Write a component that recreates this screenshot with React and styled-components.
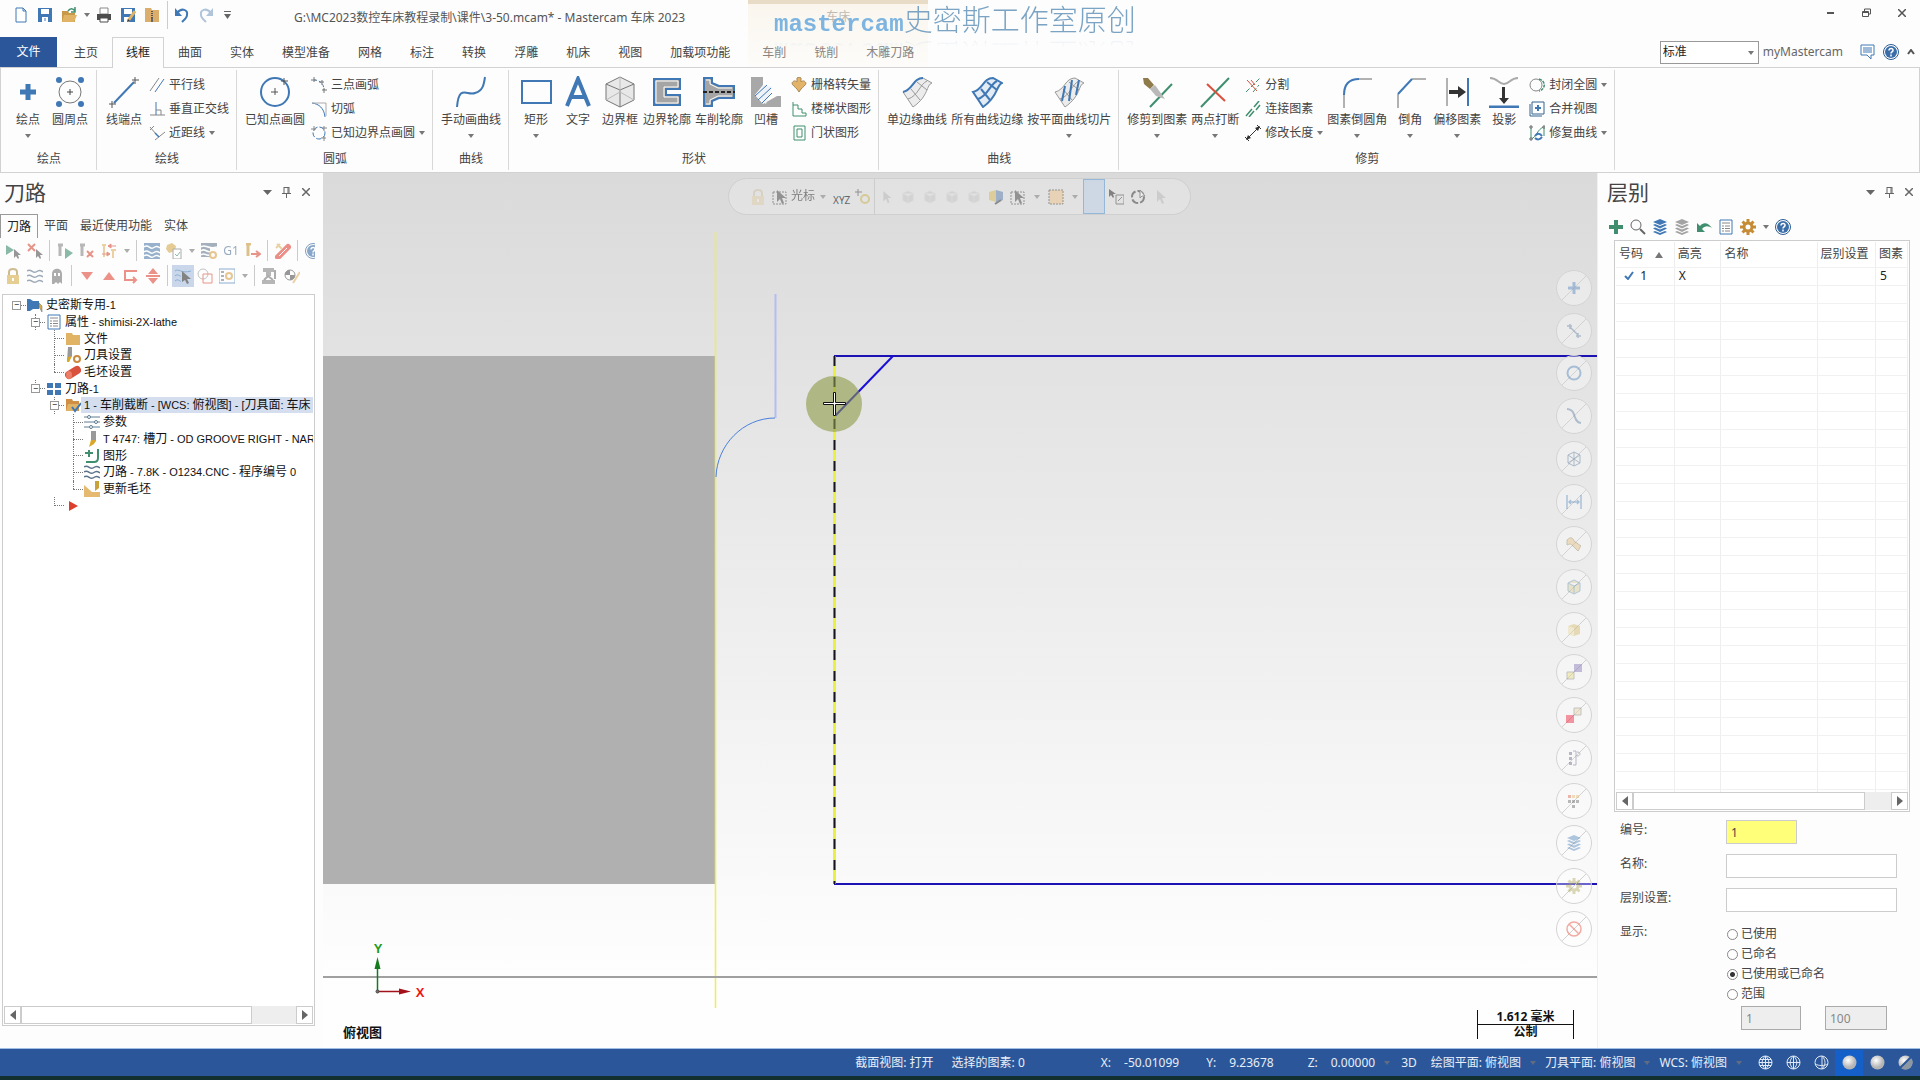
import React from "react";
import styled, { createGlobalStyle } from "styled-components";

const BLUE = "#3f78b5";
const GREEN = "#3f8f6f";
const GREY = "#8a8a8a";
const TAN = "#e0b365";
const RED = "#d9503c";

// Icons, large ones are on a 32 grid
const bigIcons = {
  point: <path d="M16 8v16M8 16h16" stroke={BLUE} strokeWidth="5" />,
  circlePoints: (
    <>
      <circle cx="16" cy="16" r="11" stroke="#777" />
      <path d="M16 13v6M13 16h6" stroke="#444" />
      <g fill={BLUE}>
        <circle cx="5" cy="4" r="3" />
        <circle cx="27" cy="4" r="3" />
        <circle cx="5" cy="28" r="3" />
        <circle cx="27" cy="28" r="3" />
      </g>
    </>
  ),
  line: (
    <>
      <path d="M6 27L26 6" stroke={BLUE} strokeWidth="2" />
      <path d="M4 25v7M1 28h7M27 1v7M24 4h7" stroke="#555" />
    </>
  ),
  circle: (
    <>
      <circle cx="16" cy="16" r="14" stroke={BLUE} strokeWidth="2" />
      <path d="M16 12v7M12 16h7M25 2v7M22 5h7" stroke="#555" />
    </>
  ),
  spline: (
    <path d="M2 31C4 8 12 20 20 17C28 15 29 8 30 1" stroke={BLUE} strokeWidth="2" />
  ),
  rect: <rect x="2" y="5" width="29" height="22" stroke={BLUE} strokeWidth="2" />,
  letter: (
    <path d="M5 30L16 3L27 30M9 21h14" stroke={BLUE} strokeWidth="4" />
  ),
  box: (
    <>
      <path d="M16 1l14 7v16l-14 7l-14-7V8z" fill="#e8e8e8" stroke="#777" />
      <path d="M2 8l14 6l14-6M16 14v17" stroke="#777" />
      <path d="M16 1v15M2 24l14-8l14 8" stroke="#bbb" />
    </>
  ),
  silhouette: (
    <>
      <path d="M3 3h26v10H15v6h14v10H3z" fill="#a5a5a5" stroke={BLUE} strokeWidth="2" />
      <path d="M5 5h22v6H13v10h14v6H5z" stroke="#fff" />
    </>
  ),
  turn: (
    <>
      <path d="M1 2h8v5l7 3h15v12H16l-7 3v5H1z" fill="#a5a5a5" stroke={BLUE} strokeWidth="2" />
      <path d="M3 4h4v4l8 4h14M3 28h4v-4l8-4h14" stroke="#fff" />
      <path d="M0 16h32" stroke="#222" strokeWidth="2" strokeDasharray="4 2" />
    </>
  ),
  relief: (
    <>
      <path d="M1 1h12v8L5 19l8 9l14-8h4v11H1z" fill="#a8a8a8" />
      <path d="M13 9l9 2l-6 17l-10-8z" fill="#eef3fa" />
      <path d="M5 20l12-11M8 24l13-12M12 27l10-10" stroke={BLUE} />
    </>
  ),
  edge: (
    <>
      <path d="M2 16C12 14 12 2 22 2L31 7C25 9 28 20 12 31z" fill="#ececec" stroke="#999" />
      <path d="M7 23C17 20 19 8 26 5M10 13l9 11M16 6l10 8" stroke="#999" />
      <path d="M2 16C12 14 12 2 22 2" stroke={BLUE} strokeWidth="2" />
    </>
  ),
  edges: (
    <>
      <path d="M2 16C12 14 12 2 22 2L31 7C25 9 28 20 12 31z" fill="#e3ebf5" stroke={BLUE} strokeWidth="2" />
      <path d="M7 23C17 20 19 8 26 5M10 13l9 11M16 6l10 8" stroke={BLUE} strokeWidth="2" />
    </>
  ),
  slice: (
    <>
      <path d="M2 16C12 14 12 2 22 2L31 7C25 9 28 20 12 31z" fill="#ececec" stroke="#999" />
      <path d="M7 23C17 20 19 8 26 5M10 13l9 11M16 6l10 8" stroke="#999" />
      <path d="M12 10l-3 15M19 4l-3 21M26 4l-3 15" stroke={BLUE} strokeWidth="2" />
    </>
  ),
  trim: (
    <>
      <path d="M9 31L31 8" stroke={GREEN} strokeWidth="2" />
      <path d="M2 2l5 0l6 7l-4 4l-6-5z" fill="#8f7a4a" />
      <path d="M9 13l5-4l10 14l-9-3z" fill="#b9b9b9" />
    </>
  ),
  breakTwo: (
    <>
      <path d="M2 31L30 2" stroke={GREEN} strokeWidth="2" />
      <path d="M8 8l18 17" stroke={RED} strokeWidth="2" />
    </>
  ),
  fillet: (
    <>
      <path d="M3 32V18M18 3h13" stroke="#666" />
      <path d="M3 19C3 8 8 3 18 3" stroke={BLUE} strokeWidth="2" />
    </>
  ),
  chamfer: (
    <>
      <path d="M4 32V18M18 3h14" stroke="#666" />
      <path d="M4 18L18 3" stroke={BLUE} strokeWidth="2" />
    </>
  ),
  offset: (
    <>
      <path d="M6 2v28" stroke="#666" />
      <path d="M27 2v28" stroke={BLUE} strokeWidth="2" />
      <path d="M8 14h9V10l8 6l-8 6v-4H8z" fill="#333" />
    </>
  ),
  project: (
    <>
      <path d="M2 2C10 2 10 8 16 8s6-6 14-6" stroke="#aaa" strokeWidth="2" />
      <path d="M14 11h3v11h4l-5 6l-5-6h3z" fill="#333" />
      <path d="M1 31h30" stroke={BLUE} strokeWidth="3" />
    </>
  ),
};

const layerShapes = (color) => (
  <g fill={color} stroke="none">
    <path d="M8 0l7 3l-7 3l-7-3z" />
    <path d="M1 6l2-1l5 2l5-2l2 1l-7 3.500z" />
    <path d="M1 9.500l2-1l5 2l5-2l2 1l-7 3.500z" />
    <path d="M1 13l2-1l5 2l5-2l2 1l-7 3z" />
  </g>
);

const gearShape = (color) => (
  <>
    <circle cx="8" cy="8" r="4" stroke={color} strokeWidth="3" />
    <path d="M8 0v3M8 13v3M0 8h3M13 8h3M2.500 2.500l2 2M11.500 11.500l2 2M13.500 2.500l-2 2M4.500 11.500l-2 2" stroke={color} strokeWidth="3" />
  </>
);

const cubeShape = (fill, line) => (
  <path d="M8 1l6 3v8l-6 3l-6-3V4zM2 4l6 3l6-3M8 7v8" fill={fill} stroke={line} />
);

const pointer = (color) => (
  <path d="M5 1v12l3-3l2 5l2-1l-2-5h4z" fill={color} />
);

// Small ones are on a 16 grid
const icons = {
  newFile: <path d="M3 1h7l3 3v11H3zM10 1v3h3" fill="#fff" stroke={BLUE} />,
  save: (
    <>
      <path d="M1 1h14v14H1z" fill={BLUE} />
      <path d="M4 2h8v5H4zM5 10h6v5H5z" fill="#fff" />
      <path d="M8 11v3" stroke={BLUE} />
    </>
  ),
  open: (
    <>
      <path d="M1 4h6l1 2h6v9H1z" fill="#c9994a" />
      <path d="M3 8h13l-3 7H1z" fill={TAN} />
      <path d="M7 4C9 1 12 1 14 4M14 0v5h-4" stroke={GREEN} strokeWidth="1.500" />
    </>
  ),
  print: (
    <>
      <path d="M4 1h8v6H4z" fill="#fff" stroke={GREY} />
      <path d="M1 7h14v6H1z" fill="#4c4c4c" />
      <path d="M4 11h8v4H4z" fill="#fff" stroke="#4c4c4c" />
    </>
  ),
  saveAs: (
    <>
      <path d="M1 1h14v14H1z" fill={BLUE} />
      <path d="M4 2h8v5H4zM4 10h5v5H4z" fill="#fff" />
      <path d="M8 14L15 4" stroke={TAN} strokeWidth="3" />
      <path d="M7 15l1-3l2 2z" fill="#333" />
    </>
  ),
  zip: (
    <>
      <path d="M1 1h6l1 2h7v12H1z" fill="#dcae6b" />
      <path d="M8 4v8" stroke="#555" strokeWidth="2" strokeDasharray="1 1" />
      <path d="M7 11h2v4H7z" fill="#666" />
    </>
  ),
  undo: (
    <>
      <path d="M3 6C8 0 14 3 13 8c0 3-3 5-5 7" stroke={BLUE} strokeWidth="2" />
      <path d="M1 1v8h7z" fill={BLUE} />
    </>
  ),
  redo: (
    <>
      <path d="M13 6C8 0 2 3 3 8c0 3 3 5 5 7" stroke="#b0c4da" strokeWidth="2" />
      <path d="M15 1v8H8z" fill="#b0c4da" />
    </>
  ),
  parallel: (
    <>
      <path d="M1 14L10 1" stroke="#888" />
      <path d="M6 15L15 2" stroke={BLUE} />
    </>
  ),
  perpendicular: (
    <>
      <path d="M1 14h15" stroke="#888" />
      <path d="M7 1v13" stroke={BLUE} />
      <path d="M7 9h5v5" stroke="#888" />
    </>
  ),
  closest: (
    <>
      <path d="M1 2l6 7M6 15l10-8M1 5l4-4" stroke="#888" />
      <path d="M6 8l4 4" stroke={BLUE} strokeWidth="1.500" />
    </>
  ),
  arc3: (
    <>
      <path d="M3 3C9 3 13 7 13 13" stroke={BLUE} strokeDasharray="3 2" />
      <path d="M0 3h5M3 0v5M8 5h5M11 3v5M11 13h5M13 11v5" stroke="#777" />
    </>
  ),
  arcTangent: (
    <>
      <path d="M1 2C8 3 13 7 14 16" stroke={BLUE} />
      <path d="M1 2h14v13" stroke="#aaa" />
    </>
  ),
  circleEdge: (
    <>
      <circle cx="8" cy="8" r="6" stroke={BLUE} strokeDasharray="5 2" />
      <path d="M0 4h5M3 1v5M11 3h5M13 1v5M10 13h5M13 11v5" stroke="#888" />
    </>
  ),
  raster: (
    <path d="M6 1c0-1 4-1 4 0v4c2-2 4-1 5 1c0 2-3 4-5 6l-2 3l-2-3c-2-2-5-4-5-6c1-2 3-3 5-1z" fill="#e3b368" stroke="#a88a55" />
  ),
  stairs: <path d="M2 1v14h13v-3h-4V8H7V4H2" stroke={GREEN} />,
  door: <path d="M3 1h11v14H3zM6 4h5v8H6z" stroke={GREEN} />,
  divide: (
    <>
      <path d="M1 15L15 1M8 15l6-7" stroke={GREEN} strokeDasharray="5 2" />
      <path d="M2 3l10 11M6 3l4 5" stroke={RED} />
    </>
  ),
  join: (
    <path d="M1 15l6-7M9 6l5-6M4 16l5-6M11 9l4-5" stroke={GREEN} strokeWidth="1.500" />
  ),
  length: (
    <>
      <path d="M2 14L14 2" stroke="#333" />
      <path d="M0 12l4 4M12 0l4 4" stroke="#333" />
      <path d="M1 15l5-2l-3-3zM15 1l-5 2l3 3z" fill="#333" />
    </>
  ),
  closeArc: (
    <>
      <circle cx="7" cy="8" r="6" stroke="#888" />
      <path d="M10 2C17 4 17 12 10 14" stroke={GREEN} strokeWidth="1.500" strokeDasharray="3 1" />
    </>
  ),
  merge: (
    <>
      <path d="M3 1h12v12H3zM1 3v12h12" stroke="#35658f" />
      <path d="M9 4v6M6 7h6" stroke={BLUE} strokeWidth="2" />
    </>
  ),
  repair: (
    <>
      <path d="M2 2v12M2 14C8 12 8 4 15 2v9" stroke={GREEN} />
      <path d="M1 1h2v2H1zM1 13h2v2H1zM14 1h2v2h-2z" fill="#fff" stroke="#666" />
      <path d="M6 11c2-3 5-3 7 0M13 12c-2 3-5 3-7 1" stroke={BLUE} strokeWidth="2" />
    </>
  ),
  chat: (
    <>
      <path d="M2 1h13v10h-3v4l-4-4H2z" fill="#fff" stroke={BLUE} />
      <path d="M4 4h9M4 6h9M4 8h9" stroke={BLUE} />
    </>
  ),
  help: (
    <>
      <circle cx="8" cy="8" r="7.500" fill="#fff" stroke="#2b5c94" />
      <circle cx="8" cy="8" r="6" fill="#3b6ea8" />
      <path d="M6 6.500C6 3.500 10.500 4 10 6.500C9.700 8 8 8 8 9.500M8 10.500v2" stroke="#fff" strokeWidth="1.500" />
    </>
  ),
  selectAll: (
    <>
      <path d="M1 2l8 5l-8 5z" fill={GREEN} />
      <path d="M9 6v9l2-2l2 3l1-1l-1-3h3z" fill="#555" />
    </>
  ),
  selectNone: (
    <>
      <path d="M1 1l7 7M8 1l-7 7" stroke={RED} strokeWidth="2" />
      <path d="M9 6v9l2-2l2 3l1-1l-1-3h3z" fill="#555" />
    </>
  ),
  toolGo: (
    <>
      <path d="M1 2h5M3 2v11" stroke={GREY} strokeWidth="3" />
      <path d="M8 5l8 5l-8 6z" fill={GREEN} />
    </>
  ),
  toolStop: (
    <>
      <path d="M1 2h5M3 2v11" stroke={GREY} strokeWidth="3" />
      <path d="M8 8l6 6M14 8l-6 6" stroke={RED} strokeWidth="2" />
    </>
  ),
  toolSwap: (
    <>
      <path d="M3 2v12M1 2h4M12 7v8M10 7h5" stroke={TAN} strokeWidth="2" />
      <path d="M7 3h8M7 3l3-2v4zM1 11h8M9 11l-3-2v4z" fill={RED} stroke={RED} />
    </>
  ),
  waves: (
    <path d="M0 3c4-3 6 3 9 1s4-2 7 0M0 8c4-3 6 3 9 1s4-2 7 0M0 13c4-3 6 3 9 1s4-2 7 0" stroke="#5b7288" strokeWidth="1.500" />
  ),
  backplot: (
    <>
      <path d="M0 0h16v16H0z" fill="#5480ad" />
      <path d="M0 4c4-4 6 3 9 1s4-2 7 0M0 9c4-4 6 3 9 1s4-2 7 0M0 13c4-4 6 3 9 1s4-2 7 0" stroke="#fff" strokeWidth="1.500" />
    </>
  ),
  verify: (
    <>
      <path d="M1 2l5-2l4 3l-1 5l-6 2l-3-4z" fill="#d6ab4f" />
      <path d="M7 6h8v10H7z" fill="#fff" stroke="#777" />
      <path d="M9 11l2 2l3-4" stroke={GREEN} />
    </>
  ),
  waveGear: (
    <>
      <path d="M0 0h16v5H0zM0 5h9v9H0z" fill="#6a7f92" />
      <path d="M0 4c4-4 6 3 16 0M0 8c4-4 6 3 10 0M0 12c3-3 5 1 8 0" stroke="#fff" strokeWidth="1.500" />
      <circle cx="12" cy="12" r="3" stroke="#d9a24a" strokeWidth="2" />
    </>
  ),
  feed: (
    <>
      <path d="M1 1h5M3 1v12" stroke="#c79a3e" strokeWidth="3" />
      <path d="M6 11h9M11 8l4 3l-4 3" stroke={RED} strokeWidth="2" />
    </>
  ),
  pen: (
    <>
      <path d="M3 14L13 4" stroke="#e0453a" strokeWidth="6" strokeLinecap="round" />
      <path d="M1 5l4-4M2 1l5 5" stroke={TAN} strokeWidth="2" />
      <path d="M4 13l8-8" stroke="#fff" />
    </>
  ),
  lock: (
    <>
      <path d="M4 7V4c0-4 8-4 8 0v3" stroke="#b0924a" strokeWidth="2" />
      <path d="M2 7h12v9H2z" fill="#d8ae4c" />
      <path d="M8 10v3" stroke="#fff" strokeWidth="2" />
    </>
  ),
  ghost: (
    <>
      <path d="M3 16V6c0-7 10-7 10 0v10l-2-2l-2 2l-2-2l-2 2z" fill="#777" />
      <path d="M6 5v3M10 5v3" stroke="#fff" strokeWidth="2" />
    </>
  ),
  down: <path d="M2 4h12l-6 8z" fill="#e04a3a" />,
  up: <path d="M2 12h12L8 4z" fill="#e04a3a" />,
  insert: <path d="M14 3H2v9h11M10 9l3 3l-3 3" stroke="#e04a3a" strokeWidth="2" />,
  upDown: <path d="M3 6h10L8 0zM3 10h10l-5 6zM1 7h14v2H1z" fill="#e04a3a" />,
  wavePick: (
    <>
      <path d="M0 3c4-3 6 3 16 0M0 8c3-3 5 1 6 0M0 13c3-3 5 1 6 0" stroke={BLUE} />
      <path d="M7 3v11l3-2l2 4l2-1l-2-4h4z" fill="#333" />
    </>
  ),
  shapes: (
    <>
      <circle cx="6" cy="6" r="5" stroke="#999" />
      <path d="M6 6h9v9H6z" stroke={RED} />
    </>
  ),
  opts: (
    <>
      <path d="M0 1h16v14H0z" stroke={BLUE} />
      <path d="M2 4h3M2 8h3M2 12h3" stroke="#555" strokeWidth="1.500" />
      <circle cx="10" cy="8" r="3" stroke="#d9a24a" strokeWidth="2" />
    </>
  ),
  machine: (
    <>
      <path d="M1 0h11v4H1zM4 4h5v4H4zM0 12h13v4H0z" fill="#888" />
      <path d="M2 12l4-4l5 4M13 2v9" stroke="#777" strokeWidth="2" />
    </>
  ),
  target: (
    <>
      <circle cx="6" cy="7" r="5" stroke="#555" />
      <path d="M6 2v5H1C1 4 3 2 6 2zM6 12V7h5c0 3-2 5-5 5z" fill="#555" />
      <path d="M9 15L16 4" stroke={TAN} strokeWidth="2" />
    </>
  ),
  lathe: (
    <>
      <path d="M0 2h3l3 2h6v8H6l-3 2H0z" fill={BLUE} />
      <path d="M12 6l3 3v6l-3-5z" fill="#d9ae3a" stroke="#666" strokeWidth="0.500" />
    </>
  ),
  props: (
    <>
      <path d="M2 1h12v14H2z" fill="#fff" stroke={BLUE} />
      <path d="M4 4h8M4 7h2M7 7h5M4 9.500h2M7 9.500h5M4 12h2M7 12h5" stroke="#888" />
    </>
  ),
  folder: <path d="M1 2h6l1 2h7v10H1z" fill={TAN} />,
  toolSet: (
    <>
      <path d="M3 0h4v9l-3 5H2z" fill="#999" />
      <path d="M3 10l4-1l-3 6H2z" fill="#d9a72a" />
      <circle cx="12" cy="12" r="3" stroke="#c98a3f" strokeWidth="2" />
    </>
  ),
  stock: (
    <>
      <path d="M4 11L12 6" stroke="#d9503c" strokeWidth="8" strokeLinecap="round" />
      <ellipse cx="4" cy="11" rx="3" ry="4" fill="#ec7d66" />
    </>
  ),
  group: <path d="M1 2h6v5H1zM9 2h6v5H9zM1 9h6v5H1zM9 9h6v5H9z" fill={BLUE} />,
  opFolder: (
    <>
      <path d="M1 2h6l1 2h6v10H1z" fill="#cf8f45" />
      <path d="M3 7h12l-3 7H1z" fill={TAN} />
      <path d="M7 10l3 4l6-8" stroke={BLUE} strokeWidth="2" />
    </>
  ),
  params: (
    <>
      <path d="M0 3h16M0 8h16M0 13h16" stroke="#5f7d92" />
      <g fill="#fff" stroke="#5f7d92">
        <circle cx="5" cy="3" r="1.500" />
        <circle cx="12" cy="8" r="1.500" />
        <circle cx="7" cy="13" r="1.500" />
      </g>
    </>
  ),
  cutter: (
    <>
      <path d="M7 0h5v10l-3 3H7z" fill="#999" />
      <path d="M7 9l5 0l-2 4l-5 3z" fill="#d9a72a" />
    </>
  ),
  geometry: (
    <>
      <path d="M14 1v9c0 3-1 4-4 4H2" stroke={GREEN} strokeWidth="2" />
      <path d="M5 2v7M1 5h8" stroke={GREEN} strokeWidth="2" />
    </>
  ),
  stockUpdate: (
    <>
      <path d="M0 4l8 7h8v5H0z" fill="#e6b971" />
      <path d="M11 0h4v7l-4 3z" fill="#c9a23a" />
    </>
  ),
  redArrow: <path d="M4 3l9 5l-9 5z" fill="#dd3f2c" />,
  plusGreen: <path d="M8 1v14M1 8h14" stroke={GREEN} strokeWidth="4" />,
  search: (
    <>
      <circle cx="6" cy="6" r="5" stroke="#666" />
      <path d="M10 10l5 5" stroke="#666" strokeWidth="2" />
    </>
  ),
  layers: layerShapes(BLUE),
  layersGrey: layerShapes("#a3a3a3"),
  back: <path d="M1 4v9h8L6 10C9 6 13 7 16 9C12 3 7 3 4 7z" fill={GREEN} />,
  gear: gearShape("#c58b35"),
  cursorBox: (
    <>
      <path d="M1 3h13v12H1z" stroke="#444" strokeDasharray="2 1" />
      {pointer("#444")}
    </>
  ),
  plusGear: (
    <>
      <path d="M3 0v7M0 3h7" stroke="#444" />
      <circle cx="10" cy="10" r="4" stroke="#c9b24b" strokeWidth="2" />
    </>
  ),
  cursor: pointer("#777"),
  cube: cubeShape("#999", "#bbb"),
  cubeTwo: (
    <>
      <path d="M1 3l7-2v12l-7-2z" fill="#d8b957" />
      <path d="M8 1l7 2v8l-7 3z" fill="#5d7fae" />
      <path d="M7 15l6-4" stroke="#333" strokeWidth="2" />
    </>
  ),
  area: (
    <path d="M1 1h14v14H1z" fill="#eec48c" stroke="#444" strokeDasharray="2 1" />
  ),
  cursorDoc: (
    <>
      <path d="M1 0v8l2-2l2 3l1-1l-1-3h3z" fill="#222" />
      <path d="M8 6h8v9H8zM10 12l4-4" stroke="#444" />
    </>
  ),
  cursorLoop: (
    <>
      <circle cx="8" cy="8" r="6" stroke="#333" strokeWidth="2" strokeDasharray="7 2" />
      <path d="M10 1v8l2-2l3 0z" fill="#fff" stroke="#444" />
    </>
  ),
  plus: <path d="M8 2v12M2 8h12" stroke={BLUE} strokeWidth="3" />,
  lineSm: (
    <path d="M4 4l8 8M1 3h5M4 1v5M10 13h5M12 10v5" stroke="#52749a" strokeWidth="1.500" />
  ),
  ring: <circle cx="8" cy="8" r="6.500" stroke={BLUE} strokeWidth="2" />,
  curveSm: <path d="M1 1C11 1 6 14 15 15" stroke="#52749a" strokeWidth="2" />,
  wireBox: (
    <path d="M8 1l6 3v8l-6 3l-6-3V4zM2 4l6 4l6-4M2 12l6-4l6 4M8 1v14" stroke="#41688f" />
  ),
  dimension: <path d="M1 1v14M15 1v14M3 8h10M5 6l-2 2l2 2M11 6l2 2l-2 2" stroke={BLUE} strokeWidth="1.500" />,
  surfaceSm: <path d="M1 4c4-4 6-2 7 1l7 5c-1 0-2 4-3 5l-6-6c-2-2-4 0-5 0z" fill="#e2b873" stroke="#8b7a4c" />,
  solidWire: cubeShape("#d6c98a", "#4f82a8"),
  solid: (
    <>
      <path d="M2 4l6-2l6 2v8l-6 2l-6-2z" fill="#d2b45c" />
      <path d="M2 4l6 2v8l-6-2z" fill="#eadba0" />
    </>
  ),
  squaresA: (
    <>
      <path d="M8 0h8v8H8z" fill="#7a68b0" />
      <path d="M1 8h7v7H1z" fill="#e5da73" stroke="#777" />
    </>
  ),
  squaresB: (
    <>
      <path d="M8 1h7v7H8z" fill="#e8d2a0" stroke="#777" />
      <path d="M0 8h8v8H0z" fill="#f00020" />
    </>
  ),
  bracket: (
    <>
      <path d="M3 2h3v3H3zM3 7h3v3H3zM3 12h3v3H3z" fill="#557" />
      <path d="M7 1h3v14H7M11 2c4 0 4 4 0 4" stroke="#557" />
    </>
  ),
  grid: (
    <>
      <path d="M2 2h3v3H2z" fill={RED} />
      <path d="M6 2h3v3H6zM10 2h3v3h-3z" fill={TAN} />
      <path d="M2 7h3v3H2zM6 7h3v3H6zM10 7h3v3h-3zM6 12h3v3H6z" fill="#555" />
    </>
  ),
  gearSm: gearShape("#a9a24f"),
  ban: (
    <>
      <circle cx="8" cy="8" r="7" stroke="#e0331f" strokeWidth="1.500" />
      <path d="M3 3l10 10" stroke="#e0331f" strokeWidth="1.500" />
    </>
  ),
};

const Icon = ({ name, size = 16 }) => (
  <svg width={size} height={size} viewBox="0 0 16 16" fill="none" aria-hidden="true">
    {icons[name]}
  </svg>
);

const BigIcon = ({ name }) => (
  <svg width="32" height="32" viewBox="0 0 32 32" fill="none" aria-hidden="true">
    {bigIcons[name]}
  </svg>
);

// Data
const tabs = ["主页", "线框", "曲面", "实体", "模型准备", "网格", "标注", "转换", "浮雕", "机床", "视图", "加载项功能"];
const contextTabs = ["车削", "铣削", "木雕刀路"];

// big: [label, icon, has menu], small: [label, icon, has menu]
const groups = [
  { title: "绘点", parts: [{ big: ["绘点", "point", true] }, { big: ["圆周点", "circlePoints"] }] },
  {
    title: "绘线",
    parts: [
      { big: ["线端点", "line"] },
      { small: [["平行线", "parallel"], ["垂直正交线", "perpendicular"], ["近距线", "closest", true]] },
    ],
  },
  {
    title: "圆弧",
    parts: [
      { big: ["已知点画圆", "circle"] },
      { small: [["三点画弧", "arc3"], ["切弧", "arcTangent"], ["已知边界点画圆", "circleEdge", true]] },
    ],
  },
  { title: "曲线", parts: [{ big: ["手动画曲线", "spline", true] }] },
  {
    title: "形状",
    parts: [
      { big: ["矩形", "rect", true] },
      { big: ["文字", "letter"] },
      { big: ["边界框", "box"] },
      { big: ["边界轮廓", "silhouette"] },
      { big: ["车削轮廓", "turn"] },
      { big: ["凹槽", "relief"] },
      { small: [["栅格转矢量", "raster"], ["楼梯状图形", "stairs"], ["门状图形", "door"]] },
    ],
  },
  {
    title: "曲线",
    parts: [
      { big: ["单边缘曲线", "edge"] },
      { big: ["所有曲线边缘", "edges"] },
      { big: ["按平面曲线切片", "slice", true] },
    ],
  },
  {
    title: "修剪",
    parts: [
      { big: ["修剪到图素", "trim", true] },
      { big: ["两点打断", "breakTwo", true] },
      { small: [["分割", "divide"], ["连接图素", "join"], ["修改长度", "length", true]] },
      { big: ["图素倒圆角", "fillet", true] },
      { big: ["倒角", "chamfer", true] },
      { big: ["偏移图素", "offset", true] },
      { big: ["投影", "project"] },
      { small: [["封闭全圆", "closeArc", true], ["合并视图", "merge"], ["修复曲线", "repair", true]] },
    ],
  },
];

const pathTools = [
  ["selectAll", "selectNone", "|", "toolGo", "toolStop", "toolSwap", "v", "|", "backplot", "verify", "v", "waveGear", "G1", "feed", "|", "pen", "|", "help"],
  ["lock", "waves", "ghost", "|", "down", "up", "insert", "upDown", "|", "*wavePick", "shapes", "opts", "v", "|", "machine", "target"],
];
const levelTools = ["plusGreen", "search", "layers", "layersGrey", "back", "props", "gear", "v", "help"];

const tree = [
  { level: 0, icon: "lathe", text: "史密斯专用-1", open: true, last: true },
  { level: 1, icon: "props", text: "属性 - shimisi-2X-lathe", open: true },
  { level: 2, icon: "folder", text: "文件", lines: [1] },
  { level: 2, icon: "toolSet", text: "刀具设置", lines: [1] },
  { level: 2, icon: "stock", text: "毛坯设置", lines: [1], last: true },
  { level: 1, icon: "group", text: "刀路-1", open: true, last: true },
  { level: 2, icon: "opFolder", text: "1 - 车削截断 - [WCS: 俯视图] - [刀具面: 车床", open: true, selected: true },
  { level: 3, icon: "params", text: "参数", lines: [2] },
  { level: 3, icon: "cutter", text: "T 4747: 槽刀 - OD GROOVE RIGHT - NARROW", lines: [2] },
  { level: 3, icon: "geometry", text: "图形", lines: [2] },
  { level: 3, icon: "waves", text: "刀路 - 7.8K - O1234.CNC - 程序编号 0", lines: [2] },
  { level: 3, icon: "stockUpdate", text: "更新毛坯", lines: [2], last: true },
  { level: 2, icon: "redArrow", text: "", last: true },
];

const quickMasks = [
  "plus", "lineSm", "ring", "curveSm", "wireBox", "dimension", "surfaceSm", "solidWire",
  "solid", "squaresA", "squaresB", "bracket", "grid", "layers", "gearSm", "ban",
];

const Caret = () => <CaretMark viewBox="0 0 6 4"><path d="M0 0h6L3 4z" fill="#777" /></CaretMark>;

// Latin runs are set one size under the Chinese text
const Mixed = ({ text }) =>
  text.split(/([\u4e00-\u9fff]+)/).map((run, i) =>
    i % 2 ? run : <Latin key={i}>{run}</Latin>
  );

const Tools = ({ names }) =>
  names.map((name, i) => {
    if (name === "|") return <ToolDivider key={i} />;
    if (name === "v") return <ToolMenu key={i} aria-label="more"><Caret /></ToolMenu>;
    if (name === "G1") return <ToolButton key={i}>G1</ToolButton>;
    const active = name[0] === "*";
    const icon = active ? name.slice(1) : name;
    return (
      <ToolButton key={i} $active={active} aria-label={icon}>
        <Icon name={icon} />
      </ToolButton>
    );
  });

const PanelHead = ({ title }) => (
  <PanelTitle>
    <h2>{title}</h2>
    <PanelButton aria-label="menu">
      <svg width="9" height="5" viewBox="0 0 9 5"><path d="M0 0h9L4.500 5z" fill="#666" /></svg>
    </PanelButton>
    <PanelButton aria-label="pin">
      <svg width="9" height="11" viewBox="0 0 9 11" fill="none" stroke="#666">
        <path d="M2 0v6M7 0v6M2 0.500h5M6 1v5M0 6.500h9M4.500 7v4" />
      </svg>
    </PanelButton>
    <PanelButton aria-label="close">
      <svg width="8" height="8" viewBox="0 0 8 8" stroke="#666" strokeWidth="1.500"><path d="M0 0l8 8M8 0L0 8" /></svg>
    </PanelButton>
  </PanelTitle>
);

const ScrollBar = ({ thumb }) => (
  <ScrollTrack>
    <ScrollButton aria-label="scroll left"><svg width="6" height="10" viewBox="0 0 6 10"><path d="M6 0v10L0 5z" fill="#666" /></svg></ScrollButton>
    <ScrollRail><ScrollThumb $size={thumb} /></ScrollRail>
    <ScrollButton aria-label="scroll right"><svg width="6" height="10" viewBox="0 0 6 10"><path d="M0 0v10l6-5z" fill="#666" /></svg></ScrollButton>
  </ScrollTrack>
);

const Header = () => (
  <header>
    <TitleBar>
      <QuickAccess>
        {["newFile", "save", "open"].map((n) => <QuickButton key={n} aria-label={n}><Icon name={n} /></QuickButton>)}
        <QuickMenu aria-label="recent files"><Caret /></QuickMenu>
        {["print", "saveAs", "zip"].map((n) => <QuickButton key={n} aria-label={n}><Icon name={n} /></QuickButton>)}
        <QuickDivider />
        {["undo", "redo"].map((n) => <QuickButton key={n} aria-label={n}><Icon name={n} /></QuickButton>)}
        <QuickMenu aria-label="customize">
          <svg width="7" height="8" viewBox="0 0 7 8"><path d="M0 0h7v1H0zM0 3h7L3.500 8z" fill="#666" /></svg>
        </QuickMenu>
      </QuickAccess>
      <FileTitle>G:\MC2023数控车床教程录制\课件\3-50.mcam* - Mastercam 车床 2023</FileTitle>
      <WindowButtons>
        <button aria-label="minimize"><svg width="7" height="2"><path d="M0 0h7v2H0z" fill="#555" /></svg></button>
        <button aria-label="restore">
          <svg width="9" height="10" fill="none" stroke="#555"><path d="M2.500 3V1h6v5h-2M0.500 3.500h6v5h-6zM0.500 4.500h6" /></svg>
        </button>
        <button aria-label="close"><svg width="8" height="8" stroke="#555" strokeWidth="1.500"><path d="M0 0l8 8M8 0L0 8" /></svg></button>
      </WindowButtons>
    </TitleBar>
    <TabBar>
      <FileTab>文件</FileTab>
      {tabs.map((t) => <Tab key={t} $active={t === "线框"}>{t}</Tab>)}
      <ContextTabs>
        <ContextName>车床</ContextName>
        {contextTabs.map((t) => <Tab key={t} $faded>{t}</Tab>)}
      </ContextTabs>
      <TabTools>
        <StyleSelect>
          <select aria-label="样式" defaultValue="标准"><option>标准</option></select>
          <Caret />
        </StyleSelect>
        <a href="#my">myMastercam</a>
        <PlainButton aria-label="feedback"><Icon name="chat" /></PlainButton>
        <PlainButton aria-label="help"><Icon name="help" /></PlainButton>
        <PlainButton aria-label="collapse ribbon">
          <svg width="8" height="6" viewBox="0 0 8 6" fill="none" stroke="#555" strokeWidth="2"><path d="M1 5l3-4l3 4" /></svg>
        </PlainButton>
      </TabTools>
    </TabBar>
    <Ribbon>
      {groups.map((g, i) => (
        <Group key={i}>
          <GroupBody>
            {g.parts.map((p, j) =>
              p.big ? (
                <BigButton key={j}>
                  <BigIcon name={p.big[1]} />
                  <span>{p.big[0]}</span>
                  {p.big[2] && <Caret />}
                </BigButton>
              ) : (
                <SmallColumn key={j}>
                  {p.small.map(([label, icon, menu]) => (
                    <SmallButton key={label}>
                      <Icon name={icon} />
                      <span>{label}</span>
                      {menu && <Caret />}
                    </SmallButton>
                  ))}
                </SmallColumn>
              )
            )}
          </GroupBody>
          <GroupTitle>{g.title}</GroupTitle>
        </Group>
      ))}
    </Ribbon>
    <Watermark><span>mastercam</span>史密斯工作室原创</Watermark>
  </header>
);

const ToolpathPanel = () => (
  <LeftPanel>
    <PanelHead title="刀路" />
    <PanelTabs>
      {["刀路", "平面", "最近使用功能", "实体"].map((t, i) => <PanelTab key={t} $active={i === 0}>{t}</PanelTab>)}
    </PanelTabs>
    <FadedTools>
      {pathTools.map((row, i) => <ToolRow key={i}><Tools names={row} /></ToolRow>)}
    </FadedTools>
    <TreeBox>
      <TreeRows>
        {tree.map((row, i) => (
          <TreeRow key={i}>
            {Array.from({ length: row.level }, (_, n) => (
              <Indent key={n} $line={(row.lines || []).includes(n) || (n === 1 && i > 1 && i < 5) || (n === 2 && i > 6 && i < 12)} />
            ))}
            <Branch $root={i === 0} $last={row.last}>
              {row.open && <Expander aria-label="collapse">−</Expander>}
            </Branch>
            <Icon name={row.icon} />
            {row.text && <TreeText $selected={row.selected}><Mixed text={row.text} /></TreeText>}
          </TreeRow>
        ))}
      </TreeRows>
      <ScrollBar thumb={84} />
    </TreeBox>
  </LeftPanel>
);

const Canvas = () => (
  <Viewport>
    <Drawing>
      <rect x="0" y="183" width="392" height="528" fill="#b0b0b0" />
      <path d="M392.500 59v776" stroke="#f0ee50" strokeWidth="1.500" />
      <path d="M452.500 121v124" stroke="#b4bdf0" strokeWidth="2" fill="none" />
      <path d="M452 245C420 245 394 272 393 304" stroke="#4a7fdc" fill="none" />
      <line x1="0" x2="100%" y1="804" y2="804" stroke="#a0a0a0" strokeWidth="2" />
      <g stroke="#1c12b4" strokeWidth="2">
        <line x1="511" x2="100%" y1="183" y2="183" />
        <line x1="511" x2="100%" y1="711" y2="711" />
        <path d="M570 183L512 243" stroke="#1a0fd8" />
      </g>
      <path d="M511.500 183v528" stroke="#eaf040" strokeWidth="3" />
      <path d="M511.500 183v528" stroke="#16141f" strokeWidth="2" strokeDasharray="10 11" />
      <circle cx="511" cy="231" r="28" fill="#8c9a44" fillOpacity="0.6" />
      <path d="M510.500 219.500h2v10h10v2h-10v11h-2v-11h-10v-2h10z" fill="#fff" stroke="#111" />
      <g>
        <path d="M54.500 818V790" stroke="#157a1c" strokeWidth="1.500" />
        <path d="M54.500 784l-3 12h6z" fill="#157a1c" />
        <path d="M54 818.500h26" stroke="#a3121a" strokeWidth="1.500" />
        <path d="M88 818.500l-12-3v6z" fill="#a3121a" />
        <circle cx="54.500" cy="818.500" r="1.500" fill="#777" stroke="#444" />
      </g>
      <g fontFamily="Liberation Sans, sans-serif" fontWeight="700" fontSize="13" textAnchor="middle">
        <text x="55" y="780" fill="#1a9a22">Y</text>
        <text x="97" y="824" fill="#f01414">X</text>
      </g>
    </Drawing>
    <SelectBar>
      <Ghost><ToolButton aria-label="lock"><Icon name="lock" /></ToolButton></Ghost>
      <ToolButton aria-label="cursorBox"><Icon name="cursorBox" /></ToolButton>
      <span>光标</span>
      <ToolMenu aria-label="cursor menu"><Caret /></ToolMenu>
      <Xyz>XYZ</Xyz>
      <ToolButton aria-label="plusGear"><Icon name="plusGear" /></ToolButton>
      <SelectDivider />
      <Ghost>
        {["cursor", "cube", "cube", "cube", "cube"].map((n, i) => (
          <ToolButton key={i} aria-label={n}><Icon name={n} size={14} /></ToolButton>
        ))}
      </Ghost>
      <Tools names={["cubeTwo", "cursorBox", "v", "area", "v"]} />
      <SelectActive aria-label="mode" />
      <Tools names={["cursorDoc", "cursorLoop"]} />
      <Ghost><ToolButton aria-label="cursor"><Icon name="cursor" /></ToolButton></Ghost>
    </SelectBar>
    <MaskColumn>
      {quickMasks.map((n) => <MaskButton key={n} aria-label={n}><Icon name={n} /></MaskButton>)}
    </MaskColumn>
    <ViewName>俯视图</ViewName>
    <ScaleBox>
      <div>1.612 毫米</div>
      <div>公制</div>
    </ScaleBox>
  </Viewport>
);

const LevelsPanel = () => (
  <RightPanel>
    <PanelHead title="层别" />
    <ToolRow><Tools names={levelTools} /></ToolRow>
    <LevelBox>
      <LevelScroll>
        <LevelTable>
          <colgroup><col width="20%" /><col width="16%" /><col width="33%" /><col width="20%" /><col width="11%" /></colgroup>
          <thead>
            <tr>
              <th>号码<svg width="8" height="6" viewBox="0 0 8 6"><path d="M0 6h8L4 0z" fill="#777" /></svg></th>
              <th>高亮</th><th>名称</th><th>层别设置</th><th>图素</th>
            </tr>
          </thead>
          <tbody>
            <tr>
              <td>
                <svg width="10" height="9" viewBox="0 0 10 9" fill="none" stroke={BLUE} strokeWidth="2"><path d="M1 5l3 3l5-7" /></svg>
                {" "}1
              </td>
              <td>X</td><td /><td /><td>5</td>
            </tr>
            {Array.from({ length: 29 }, (_, i) => <tr key={i}><td /><td /><td /><td /><td /></tr>)}
          </tbody>
        </LevelTable>
      </LevelScroll>
      <ScrollBar thumb={90} />
    </LevelBox>
    <LevelForm>
      <label htmlFor="number">编号:</label>
      <TextBox id="number" defaultValue="1" $short $yellow />
      <label htmlFor="name">名称:</label>
      <TextBox id="name" />
      <label htmlFor="set">层别设置:</label>
      <TextBox id="set" />
      <span>显示:</span>
      <Choices>
        {["已使用", "已命名", "已使用或已命名", "范围"].map((c, i) => (
          <label key={c}><input type="radio" name="show" defaultChecked={i === 2} />{c}</label>
        ))}
        <RangeRow>
          <TextBox aria-label="范围起始" defaultValue="1" disabled />
          <TextBox aria-label="范围结束" defaultValue="100" disabled />
        </RangeRow>
      </Choices>
    </LevelForm>
  </RightPanel>
);

const Globe = ({ lines }) => (
  <svg width="15" height="15" viewBox="0 0 15 15" fill="none" stroke="#dfe8f4">
    <circle cx="7.500" cy="7.500" r="6.500" />
    <path d={lines} />
  </svg>
);

const Ball = ({ split }) => (
  <svg width="15" height="15" viewBox="0 0 15 15">
    <defs>
      <radialGradient id="ball" cx="0.400" cy="0.350"><stop offset="0" stopColor="#fff" /><stop offset="1" stopColor="#b5b5b5" /></radialGradient>
    </defs>
    <circle cx="7.500" cy="7.500" r="7" fill="url(#ball)" />
    {split && <path d="M12.500 2.500A7 7 0 0 1 2.500 12.500z" fill="#8e98a4" />}
    {split && <path d="M14 1L1 14" stroke="#2b579a" strokeWidth="2" />}
  </svg>
);

const Footer = () => (
  <StatusBar>
    <span>截面视图: 打开</span>
    <StatusText $gap={18}>选择的图素: 0</StatusText>
    <StatusText $gap={76}>X:</StatusText><StatusText $gap={13}>-50.01099</StatusText>
    <StatusText $gap={27}>Y:</StatusText><StatusText $gap={13}>9.23678</StatusText>
    <StatusText $gap={34}>Z:</StatusText><StatusText $gap={13}>0.00000</StatusText>
    <StatusCaret><Caret /></StatusCaret>
    <StatusText $gap={2}>3D</StatusText>
    <StatusText $gap={14}>绘图平面: 俯视图</StatusText>
    <StatusCaret><Caret /></StatusCaret>
    <span>刀具平面: 俯视图</span>
    <StatusCaret><Caret /></StatusCaret>
    <span>WCS: 俯视图</span>
    <StatusCaret><Caret /></StatusCaret>
    <StatusButton aria-label="wireframe"><Globe lines="M7.500 1v13M1 7.500h13M7.500 1C3 5 3 10 7.500 14C12 10 12 5 7.500 1M2 4.500h11M2 10.500h11" /></StatusButton>
    <StatusButton aria-label="dimmed"><Globe lines="M7.500 1v13M1 7.500h13M7.500 1C3 5 3 10 7.500 14C12 10 12 5 7.500 1" /></StatusButton>
    <StatusButton aria-label="no hidden"><Globe lines="M8 1C12 5 12 10 8 14M8 1v13M1 9C5 11 10 11 14 9" /></StatusButton>
    <StatusButton $active aria-label="outline shaded"><Ball /></StatusButton>
    <StatusButton aria-label="shaded"><Ball /></StatusButton>
    <StatusButton aria-label="translucent"><Ball split /></StatusButton>
  </StatusBar>
);

const App = () => (
  <Page>
    <GlobalStyle />
    <Header />
    <Workspace>
      <ToolpathPanel />
      <Canvas />
      <LevelsPanel />
    </Workspace>
    <Footer />
  </Page>
);

const GlobalStyle = createGlobalStyle`
  * { box-sizing: border-box; }
  body {
    margin: 0;
    background: #fdfdfd;
    color: #444;
    font: 12px/16px "Noto Sans", "Noto Sans CJK SC", sans-serif;
  }
  button, input, select { font: inherit; color: inherit; }
  button { border: 0; padding: 0; background: none; }
  svg { flex: none; }
`;

const Page = styled.div`
  height: 100vh;
  display: flex;
  flex-direction: column;
  header { position: relative; flex: none; }
`;
const CaretMark = styled.svg`
  width: 6px;
  height: 4px;
`;
const PlainButton = styled.button`
  display: flex;
`;
const Latin = styled.span`
  font-family: "Liberation Sans", sans-serif;
  font-size: 11px;
`;

// Title bar and tabs
const TitleBar = styled.div`
  display: flex;
  align-items: center;
  height: 37px;
`;
const QuickAccess = styled.div`
  display: flex;
  align-items: center;
  height: 30px;
  padding-left: 9px;
  align-self: flex-start;
  width: 294px;
`;
const QuickButton = styled.button`
  width: 24px;
  display: flex;
  justify-content: center;
`;
const QuickMenu = styled(QuickButton)`
  width: 11px;
  &:last-child { width: 18px; }
`;
const QuickDivider = styled.i`
  width: 1px;
  height: 28px;
  margin: 0 2px 0 3px;
  background: #ccc;
`;
const FileTitle = styled.div`
  white-space: nowrap;
  color: #555;
  padding-bottom: 2px;
`;
const WindowButtons = styled.div`
  display: flex;
  align-self: flex-start;
  margin-left: auto;
  button {
    width: 36px;
    height: 25px;
    display: flex;
    align-items: center;
    justify-content: center;
  }
`;
const TabBar = styled.nav`
  display: flex;
  height: 31px;
  border-bottom: 1px solid #d2d2d2;
`;
const Tab = styled.button`
  padding: 0 14px;
  height: 31px;
  color: ${(p) => (p.$faded ? "#8a8580" : p.$active ? "#222" : "#444")};
  ${(p) => p.$active && `
    padding: 0 13px;
    background: #fdfdfd;
    border: 1px solid #d2d2d2;
    border-bottom: 0;
  `}
`;
const FileTab = styled(Tab)`
  width: 57px;
  height: 30px;
  margin-right: 3px;
  background: #2b579a;
  color: #fff;
`;
const ContextTabs = styled.div`
  position: relative;
  display: flex;
  height: 67px;
  margin: -37px 0 0 4px;
  padding-top: 37px;
  border-top: 4px solid #e8dcc6;
  background: linear-gradient(#faf6ee, #fdfcfa);
  ${Tab} { margin-top: -4px; }
`;
const ContextName = styled.div`
  position: absolute;
  top: 5px;
  left: 0;
  right: 0;
  text-align: center;
  color: #c0bab2;
`;
const TabTools = styled.div`
  display: flex;
  align-items: center;
  margin-left: auto;
  padding-right: 5px;
  color: #666;
  a { color: inherit; text-decoration: none; margin: 0 8px 0 4px; }
  ${PlainButton} { margin-left: 8px; }
`;
const StyleSelect = styled.div`
  position: relative;
  width: 99px;
  select {
    width: 100%;
    height: 23px;
    padding: 0 2px;
    appearance: none;
    border: 1px solid #999;
    border-radius: 0;
    background: #fff;
    color: #222;
  }
  svg { position: absolute; right: 5px; top: 10px; }
`;
const Watermark = styled.div`
  position: absolute;
  top: 2px;
  left: 774px;
  font-size: 29px;
  font-weight: 300;
  line-height: 36px;
  color: #7ba4c4;
  white-space: nowrap;
  -webkit-box-reflect: below -12px linear-gradient(transparent 60%, rgba(0, 0, 0, 0.3));
  pointer-events: none;
  span {
    font: 700 24px/36px "Liberation Mono", monospace;
    color: #7db4e0;
  }
`;

// Ribbon
const Ribbon = styled.div`
  display: flex;
  height: 105px;
  padding: 2px 0;
  border: 1px solid #d2d2d2;
  border-top: 0;
`;
const Group = styled.section`
  display: flex;
  flex-direction: column;
  padding: 0 5px 0 6px;
  border-right: 1px solid #d8d8d8;
`;
const GroupBody = styled.div`
  display: flex;
  height: 81px;
  white-space: nowrap;
`;
const GroupTitle = styled.div`
  text-align: center;
`;
const BigButton = styled.button`
  display: flex;
  flex-direction: column;
  align-items: center;
  min-width: 42px;
  padding: 6px 2px 0;
  span { margin: 4px 0 6px; }
`;
const SmallColumn = styled.div`
  display: flex;
  flex-direction: column;
  padding: 3px 2px 2px 4px;
`;
const SmallButton = styled.button`
  display: flex;
  align-items: center;
  height: 24px;
  gap: 4px;
`;

// Side panels
const Workspace = styled.main`
  flex: 1;
  min-height: 0;
  display: flex;
`;
const Panel = styled.aside`
  flex: none;
  display: flex;
  flex-direction: column;
  background: #fdfdfd;
`;
const LeftPanel = styled(Panel)`
  width: 323px;
  padding: 0 8px 22px 2px;
`;
const RightPanel = styled(Panel)`
  width: 323px;
  padding: 0 2px 18px 7px;
  border-left: 1px solid #f0f0f0;
`;
const PanelTitle = styled.div`
  display: flex;
  align-items: center;
  height: 41px;
  padding-bottom: 3px;
  h2 {
    flex: 1;
    margin: 0;
    font-size: 21px;
    line-height: 28px;
    font-weight: 400;
    padding-left: 2px;
  }
`;
const PanelButton = styled.button`
  width: 19px;
  display: flex;
  justify-content: center;
`;
const PanelTabs = styled.div`
  display: flex;
  height: 24px;
`;
const PanelTab = styled.button`
  height: 24px;
  padding: 0 6px;
  ${(p) => p.$active && `
    margin-left: -2px;
    border: 1px solid #999;
    border-bottom: 0;
    color: #222;
  `}
`;
const ToolRow = styled.div`
  display: flex;
  align-items: center;
  height: 25px;
  overflow: hidden;
`;
const FadedTools = styled.div`
  height: 56px;
  ${ToolRow} { opacity: 0.6; }
`;
const ToolButton = styled.button`
  flex: none;
  width: 22px;
  height: 22px;
  display: flex;
  align-items: center;
  justify-content: center;
  color: #52749a;
  background: ${(p) => (p.$active ? "#a9bfe0" : "none")};
`;
const ToolMenu = styled(ToolButton)`
  width: 13px;
`;
const ToolDivider = styled.i`
  flex: none;
  width: 1px;
  height: 21px;
  margin: 0 4px 0 3px;
  background: #aaa;
`;
const TreeBox = styled.div`
  flex: 1;
  min-height: 0;
  display: flex;
  flex-direction: column;
  justify-content: space-between;
  padding: 1px;
  border: 1px solid #ccc;
  background: #fff;
`;
const TreeRows = styled.ul`
  list-style: none;
  margin: 0;
  padding: 1px 0 0 3px;
  height: 218px;
  display: grid;
  grid-template-rows: repeat(13, 1fr);
  overflow: hidden;
  color: #111;
`;
const TreeRow = styled.li`
  display: flex;
  align-items: center;
  min-height: 0;
  white-space: nowrap;
`;
const Indent = styled.i`
  flex: none;
  width: 19px;
  align-self: stretch;
`;
const Branch = styled.span`
  flex: none;
  position: relative;
  width: 19px;
  align-self: stretch;
  display: flex;
  align-items: center;
  justify-content: center;
  margin-right: 1px;
  &::before {
    content: "";
    position: absolute;
    left: 9px;
    top: 0;
    bottom: ${(p) => (p.$last ? "50%" : "0")};
    border-left: ${(p) => (p.$root ? "0" : "1px dotted #777")};
  }
  &::after {
    content: "";
    position: absolute;
    left: 9px;
    right: 0;
    top: 8px;
    border-top: 1px dotted #777;
  }
`;
const Expander = styled.button`
  position: relative;
  z-index: 1;
  width: 9px;
  height: 9px;
  border: 1px solid #999;
  background: #fff;
  font-size: 9px;
  line-height: 6px;
`;
const TreeText = styled.span`
  padding-left: 3px;
  line-height: 16px;
  ${(p) => p.$selected && `
    flex: 1;
    background: #d5deee;
  `}
`;
const ScrollTrack = styled.div`
  flex: none;
  display: flex;
  height: 18px;
`;
const ScrollButton = styled.button`
  width: 17px;
  display: flex;
  align-items: center;
  justify-content: center;
  border: 1px solid #ccc;
  background: #fff;
`;
const ScrollRail = styled.div`
  flex: 1;
  background: #eee;
`;
const ScrollThumb = styled.div`
  width: ${(p) => p.$size}%;
  height: 100%;
  border: 1px solid #ccc;
  background: #fff;
`;
const LevelBox = styled.div`
  flex: 1;
  min-height: 0;
  display: flex;
  flex-direction: column;
  margin: 1px 8px 0 9px;
  padding: 1px;
  border: 1px solid #ccc;
  background: #fff;
`;
const LevelScroll = styled.div`
  flex: 1;
  min-height: 0;
  overflow: hidden;
`;
const LevelTable = styled.table`
  width: 100%;
  table-layout: fixed;
  border-collapse: collapse;
  line-height: 14px;
  th, td {
    height: 18px;
    padding: 0 4px;
    text-align: left;
    font-weight: 400;
    white-space: nowrap;
    overflow: hidden;
    border-right: 1px solid #eee;
    border-bottom: 1px solid #f1f1f1;
  }
  th { height: 25px; padding: 0 3px; }
  th svg { float: right; margin: 5px 8px 0 0; }
  td { color: #222; }
  td svg { margin: 0 3px 0 4px; }
`;
const LevelForm = styled.form`
  display: grid;
  grid-template-columns: 106px 1fr;
  row-gap: 10px;
  padding: 8px 21px 0 15px;
  > label, > span { padding-top: 2px; }
`;
const TextBox = styled.input`
  width: ${(p) => (p.$short ? "71px" : "100%")};
  height: 24px;
  padding: 0 4px;
  border: 1px solid #ccc;
  background: ${(p) => (p.$yellow ? "#ffff7a" : "#fff")};
  &:disabled { background: #eee; border-color: #aaa; color: #888; }
`;
const Choices = styled.div`
  padding-top: 2px;
  label { display: flex; align-items: center; height: 20px; gap: 3px; }
  input[type="radio"] {
    appearance: none;
    width: 11px;
    height: 11px;
    margin: 0 0 0 1px;
    border: 1px solid #888;
    border-radius: 50%;
    background: #fff;
    &:checked { background: radial-gradient(#333 0 2px, #fff 3px); }
  }
`;
const RangeRow = styled.div`
  display: grid;
  grid-template-columns: 60px 62px;
  gap: 24px;
  padding: 2px 0 0 15px;
`;

// Graphics area
const Viewport = styled.section`
  position: relative;
  flex: 1;
  min-width: 0;
  overflow: hidden;
  background: linear-gradient(#dadada, #fefefe 92%);
`;
const Drawing = styled.svg`
  position: absolute;
  inset: 0;
  width: 100%;
  height: 100%;
`;
const SelectBar = styled.div`
  position: absolute;
  top: 5px;
  left: 405px;
  height: 37px;
  display: flex;
  align-items: center;
  padding: 0 19px 0 18px;
  border: 1px solid #cfcfcf;
  border-radius: 19px;
  background: rgba(255, 255, 255, 0.2);
  color: #666;
  > button, > span { opacity: 0.5; }
  > span { padding-bottom: 2px; opacity: 0.8; }
  ${ToolMenu} { width: 16px; }
`;
const Ghost = styled.div`
  display: flex;
  opacity: 0.2;
`;
const Xyz = styled.b`
  font-size: 10px;
  font-weight: 400;
  padding: 6px 2px 0;
`;
const SelectDivider = styled.i`
  width: 1px;
  height: 35px;
  background: #ccc;
`;
const SelectActive = styled.button`
  width: 22px;
  height: 35px;
  border: 1px solid #4a8fd0;
  background: #b9cfe6;
`;
const MaskColumn = styled.div`
  position: absolute;
  top: 97px;
  right: 5px;
  height: 677px;
  display: flex;
  flex-direction: column;
  justify-content: space-between;
`;
const MaskButton = styled.button`
  width: 36px;
  height: 36px;
  display: flex;
  align-items: center;
  justify-content: center;
  border: 1px solid #d4d4d4;
  border-radius: 50%;
  background: linear-gradient(135deg, transparent 49%, #d2d2d2 49% 51%, transparent 51%), rgba(255, 255, 255, 0.35);
  svg { opacity: 0.4; }
`;
const ViewName = styled.div`
  position: absolute;
  left: 20px;
  bottom: 8px;
  font-size: 13px;
  font-weight: 700;
  color: #111;
`;
const ScaleBox = styled.div`
  position: absolute;
  right: 23px;
  bottom: 9px;
  width: 97px;
  border: solid #111;
  border-width: 0 1px;
  text-align: center;
  font: 700 12px/14px "Noto Sans", "Noto Sans CJK SC", sans-serif;
  color: #111;
  div:first-child { border-bottom: 1px solid #111; }
`;

// Status bar
const StatusBar = styled.footer`
  flex: none;
  display: flex;
  align-items: center;
  justify-content: flex-end;
  height: 32px;
  padding-right: 1px;
  border-top: 1px solid #9fbfe6;
  border-bottom: 4px solid #12302f;
  background: #2b579a;
  color: #e8eef8;
  white-space: nowrap;
`;
const StatusText = styled.span`
  margin-left: ${(p) => p.$gap}px;
`;
const StatusCaret = styled.span`
  width: 24px;
  display: flex;
  justify-content: center;
  opacity: 0.7;
`;
const StatusButton = styled.button`
  width: 28px;
  height: 26px;
  display: flex;
  align-items: center;
  justify-content: center;
  background: ${(p) => (p.$active ? "#1560c8" : "none")};
`;

export default App;
